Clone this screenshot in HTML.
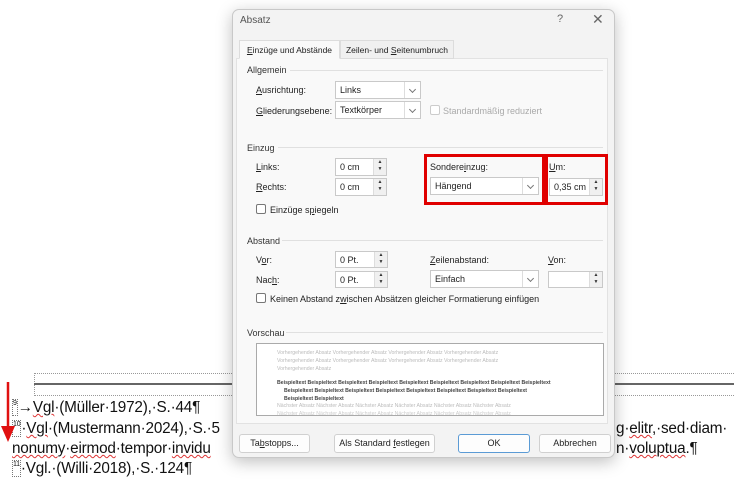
<!DOCTYPE html>
<html><head><meta charset="utf-8"><style>
*{margin:0;padding:0;box-sizing:border-box}
body{width:750px;height:494px;background:#fff;position:relative;overflow:hidden;font-family:"Liberation Sans",sans-serif;font-size:9px;color:#222}
.a{position:absolute;white-space:nowrap}
.dlg{position:absolute;left:232px;top:9px;width:383px;height:449px;background:#f3f3f3;border:1px solid #c8c8c8;border-radius:7px;box-shadow:0 4px 16px rgba(0,0,0,.25)}
.panel{position:absolute;left:236px;top:58px;width:372px;height:366px;background:#f9f9f9;border:1px solid #e2e2e2}
.tab{position:absolute;top:40px;height:19px;border:1px solid #dcdcdc;background:#f0f0f0;padding:4px 4px;font-size:8.5px;white-space:nowrap;overflow:hidden;text-align:center}
.lbl{position:absolute;font-size:9px;color:#222;white-space:nowrap}
.sec{position:absolute;font-size:9px;color:#333}
.line{position:absolute;height:1px;background:#e0e0e0}
.box{position:absolute;background:#fff;border:1px solid #c9c9c9;font-size:9px;padding:3px 4px;white-space:nowrap}
.dd:after{content:"";position:absolute;right:5px;top:5px;width:4px;height:4px;border-right:1px solid #777;border-bottom:1px solid #777;transform:rotate(45deg)}
.dd .sep{position:absolute;right:15px;top:0;bottom:0;width:1px;background:#ddd}
.spin{position:absolute;width:13px;right:0;top:0;bottom:0;background:#f0f0f0;border-left:1px solid #ddd;font-size:5px;line-height:7px;text-align:center;color:#333}
.cb{position:absolute;width:10px;height:10px;border:1px solid #777;border-radius:2px;background:#fff}
.btn{position:absolute;top:434px;height:19px;background:#fdfdfd;border:1px solid #d0d0d0;border-radius:3px;font-size:9px;text-align:center;line-height:17px;white-space:nowrap}
.red{position:absolute;border:3px solid #e00000}
.doc{position:absolute;left:12px;font-size:15.3px;color:#111;white-space:nowrap;letter-spacing:-0.2px}
.fn{display:inline-block;border:1px dotted #777;font-size:7px;vertical-align:top;height:17px;line-height:8px;padding:0}
.sq{text-decoration:underline wavy #d33;text-decoration-thickness:1px}
.pv{position:absolute;font-size:5.2px;white-space:nowrap}
</style></head><body>

<!-- document -->
<div class="a" style="left:34px;top:373px;width:700px;height:23px;border:1px dotted #999;border-right:none"></div>
<div class="a" style="left:34px;top:383px;width:700px;height:2px;background:#666"></div>
<div class="doc" style="top:399px"><span class="fn">9</span>→<span class="sq">Vgl</span>·(Müller·1972),·S.·44¶</div>
<div class="doc" style="top:420px"><span class="fn">10</span>·<span class="sq">Vgl</span>·(Mustermann·2024),·S.·5</div>
<div class="doc" style="top:440px"><span class="sq">nonumy</span>·<span class="sq">eirmod</span>·tempor·<span class="sq">invidu</span></div>
<div class="doc" style="top:460px"><span class="fn">11</span>·Vgl.·(Willi·2018),·S.·124¶</div>
<div class="doc" style="left:616px;top:420px"><span class="sq">g</span>·<span class="sq">elitr</span>,·sed·diam·</div>
<div class="doc" style="left:616px;top:440px">n·<span class="sq">voluptua</span>.¶</div>
<svg class="a" style="left:0;top:380px" width="16" height="65"><line x1="8" y1="2" x2="8" y2="50" stroke="#e01010" stroke-width="2.5"/><polygon points="1,46 15,46 8,62" fill="#e01010"/></svg>

<!-- dialog -->
<div class="dlg"></div>
<div class="a" style="left:240px;top:15px;font-size:10px;color:#555">Absatz</div>
<div class="a" style="left:557px;top:13px;font-size:11px;color:#666">?</div>
<div class="a" style="left:592px;top:11px;font-size:14px;color:#666">✕</div>
<div class="panel"></div>
<div class="tab" style="left:239px;width:101px;background:#f9f9f9;border-bottom-color:#f9f9f9;z-index:2"><u>E</u>inzüge und Abstände</div>
<div class="tab" style="left:340px;width:114px">Zeilen- und <u>S</u>eitenumbruch</div>

<div class="sec" style="left:247px;top:65px">Allgemein</div><div class="line" style="left:290px;top:70px;width:313px"></div>
<div class="lbl" style="left:256px;top:85px"><u>A</u>usrichtung:</div>
<div class="box dd" style="left:335px;top:81px;width:86px;height:18px">Links<span class="sep"></span></div>
<div class="lbl" style="left:256px;top:106px"><u>G</u>liederungsebene:</div>
<div class="box dd" style="left:335px;top:101px;width:86px;height:18px">Textkörper<span class="sep"></span></div>
<div class="cb" style="left:430px;top:105px;border-color:#ccc"></div>
<div class="lbl" style="left:443px;top:106px;color:#aaa">Standardmäßig reduziert</div>

<div class="sec" style="left:247px;top:143px">Einzug</div><div class="line" style="left:278px;top:147px;width:325px"></div>
<div class="lbl" style="left:256px;top:162px"><u>L</u>inks:</div>
<div class="box" style="left:335px;top:158px;width:52px;height:18px">0 cm<div class="spin">▲<br>▼</div></div>
<div class="lbl" style="left:256px;top:182px"><u>R</u>echts:</div>
<div class="box" style="left:335px;top:178px;width:52px;height:18px">0 cm<div class="spin">▲<br>▼</div></div>
<div class="cb" style="left:256px;top:204px"></div>
<div class="lbl" style="left:270px;top:205px">Einzüge s<u>p</u>iegeln</div>
<div class="lbl" style="left:430px;top:162px">Sondere<u>i</u>nzug:</div>
<div class="box dd" style="left:430px;top:177px;width:109px;height:18px">Hängend<span class="sep"></span></div>
<div class="lbl" style="left:549px;top:162px"><u>U</u>m:</div>
<div class="box" style="left:549px;top:178px;width:54px;height:18px">0,35 cm<div class="spin">▲<br>▼</div></div>
<div class="red" style="left:424px;top:154px;width:121px;height:51px"></div>
<div class="red" style="left:545px;top:154px;width:63px;height:51px"></div>

<div class="sec" style="left:247px;top:236px">Abstand</div><div class="line" style="left:282px;top:240px;width:321px"></div>
<div class="lbl" style="left:256px;top:255px">V<u>o</u>r:</div>
<div class="box" style="left:335px;top:251px;width:53px;height:17px">0 Pt.<div class="spin">▲<br>▼</div></div>
<div class="lbl" style="left:256px;top:275px">Nac<u>h</u>:</div>
<div class="box" style="left:335px;top:271px;width:53px;height:17px">0 Pt.<div class="spin">▲<br>▼</div></div>
<div class="lbl" style="left:430px;top:255px"><u>Z</u>eilenabstand:</div>
<div class="box dd" style="left:430px;top:270px;width:109px;height:18px">Einfach<span class="sep"></span></div>
<div class="lbl" style="left:548px;top:255px"><u>V</u>on:</div>
<div class="box" style="left:548px;top:271px;width:55px;height:17px"><div class="spin">▲<br>▼</div></div>
<div class="cb" style="left:256px;top:293px"></div>
<div class="lbl" style="left:270px;top:294px">Keinen Abstand z<u>w</u>ischen Absätzen gleicher Formatierung einfügen</div>

<div class="sec" style="left:247px;top:328px">Vorschau</div><div class="line" style="left:286px;top:332px;width:317px"></div>
<div class="a" style="left:256px;top:343px;width:348px;height:73px;background:#fff;border:1px solid #aaa;overflow:hidden">
<div class="pv" style="left:20px;top:6px;color:#bbb">Vorhergehender Absatz Vorhergehender Absatz Vorhergehender Absatz Vorhergehender Absatz</div>
<div class="pv" style="left:20px;top:14px;color:#bbb">Vorhergehender Absatz Vorhergehender Absatz Vorhergehender Absatz Vorhergehender Absatz</div>
<div class="pv" style="left:20px;top:22px;color:#bbb">Vorhergehender Absatz</div>
<div class="pv" style="left:20px;top:36px;color:#444;font-weight:bold">Beispieltext Beispieltext Beispieltext Beispieltext Beispieltext Beispieltext Beispieltext Beispieltext Beispieltext</div>
<div class="pv" style="left:27px;top:44px;color:#444;font-weight:bold">Beispieltext Beispieltext Beispieltext Beispieltext Beispieltext Beispieltext Beispieltext Beispieltext</div>
<div class="pv" style="left:27px;top:52px;color:#444;font-weight:bold">Beispieltext Beispieltext</div>
<div class="pv" style="left:20px;top:59px;color:#bbb">Nächster Absatz Nächster Absatz Nächster Absatz Nächster Absatz Nächster Absatz Nächster Absatz</div>
<div class="pv" style="left:20px;top:67px;color:#ccc">Nächster Absatz Nächster Absatz Nächster Absatz Nächster Absatz Nächster Absatz Nächster Absatz</div>
</div>

<div class="btn" style="left:239px;width:71px">Ta<u>b</u>stopps...</div>
<div class="btn" style="left:334px;width:101px">Als Standard <u>f</u>estlegen</div>
<div class="btn" style="left:458px;width:72px;border-color:#5b9bd5;background:#fdfdfd">OK</div>
<div class="btn" style="left:539px;width:72px">Abbrechen</div>
</body></html>
